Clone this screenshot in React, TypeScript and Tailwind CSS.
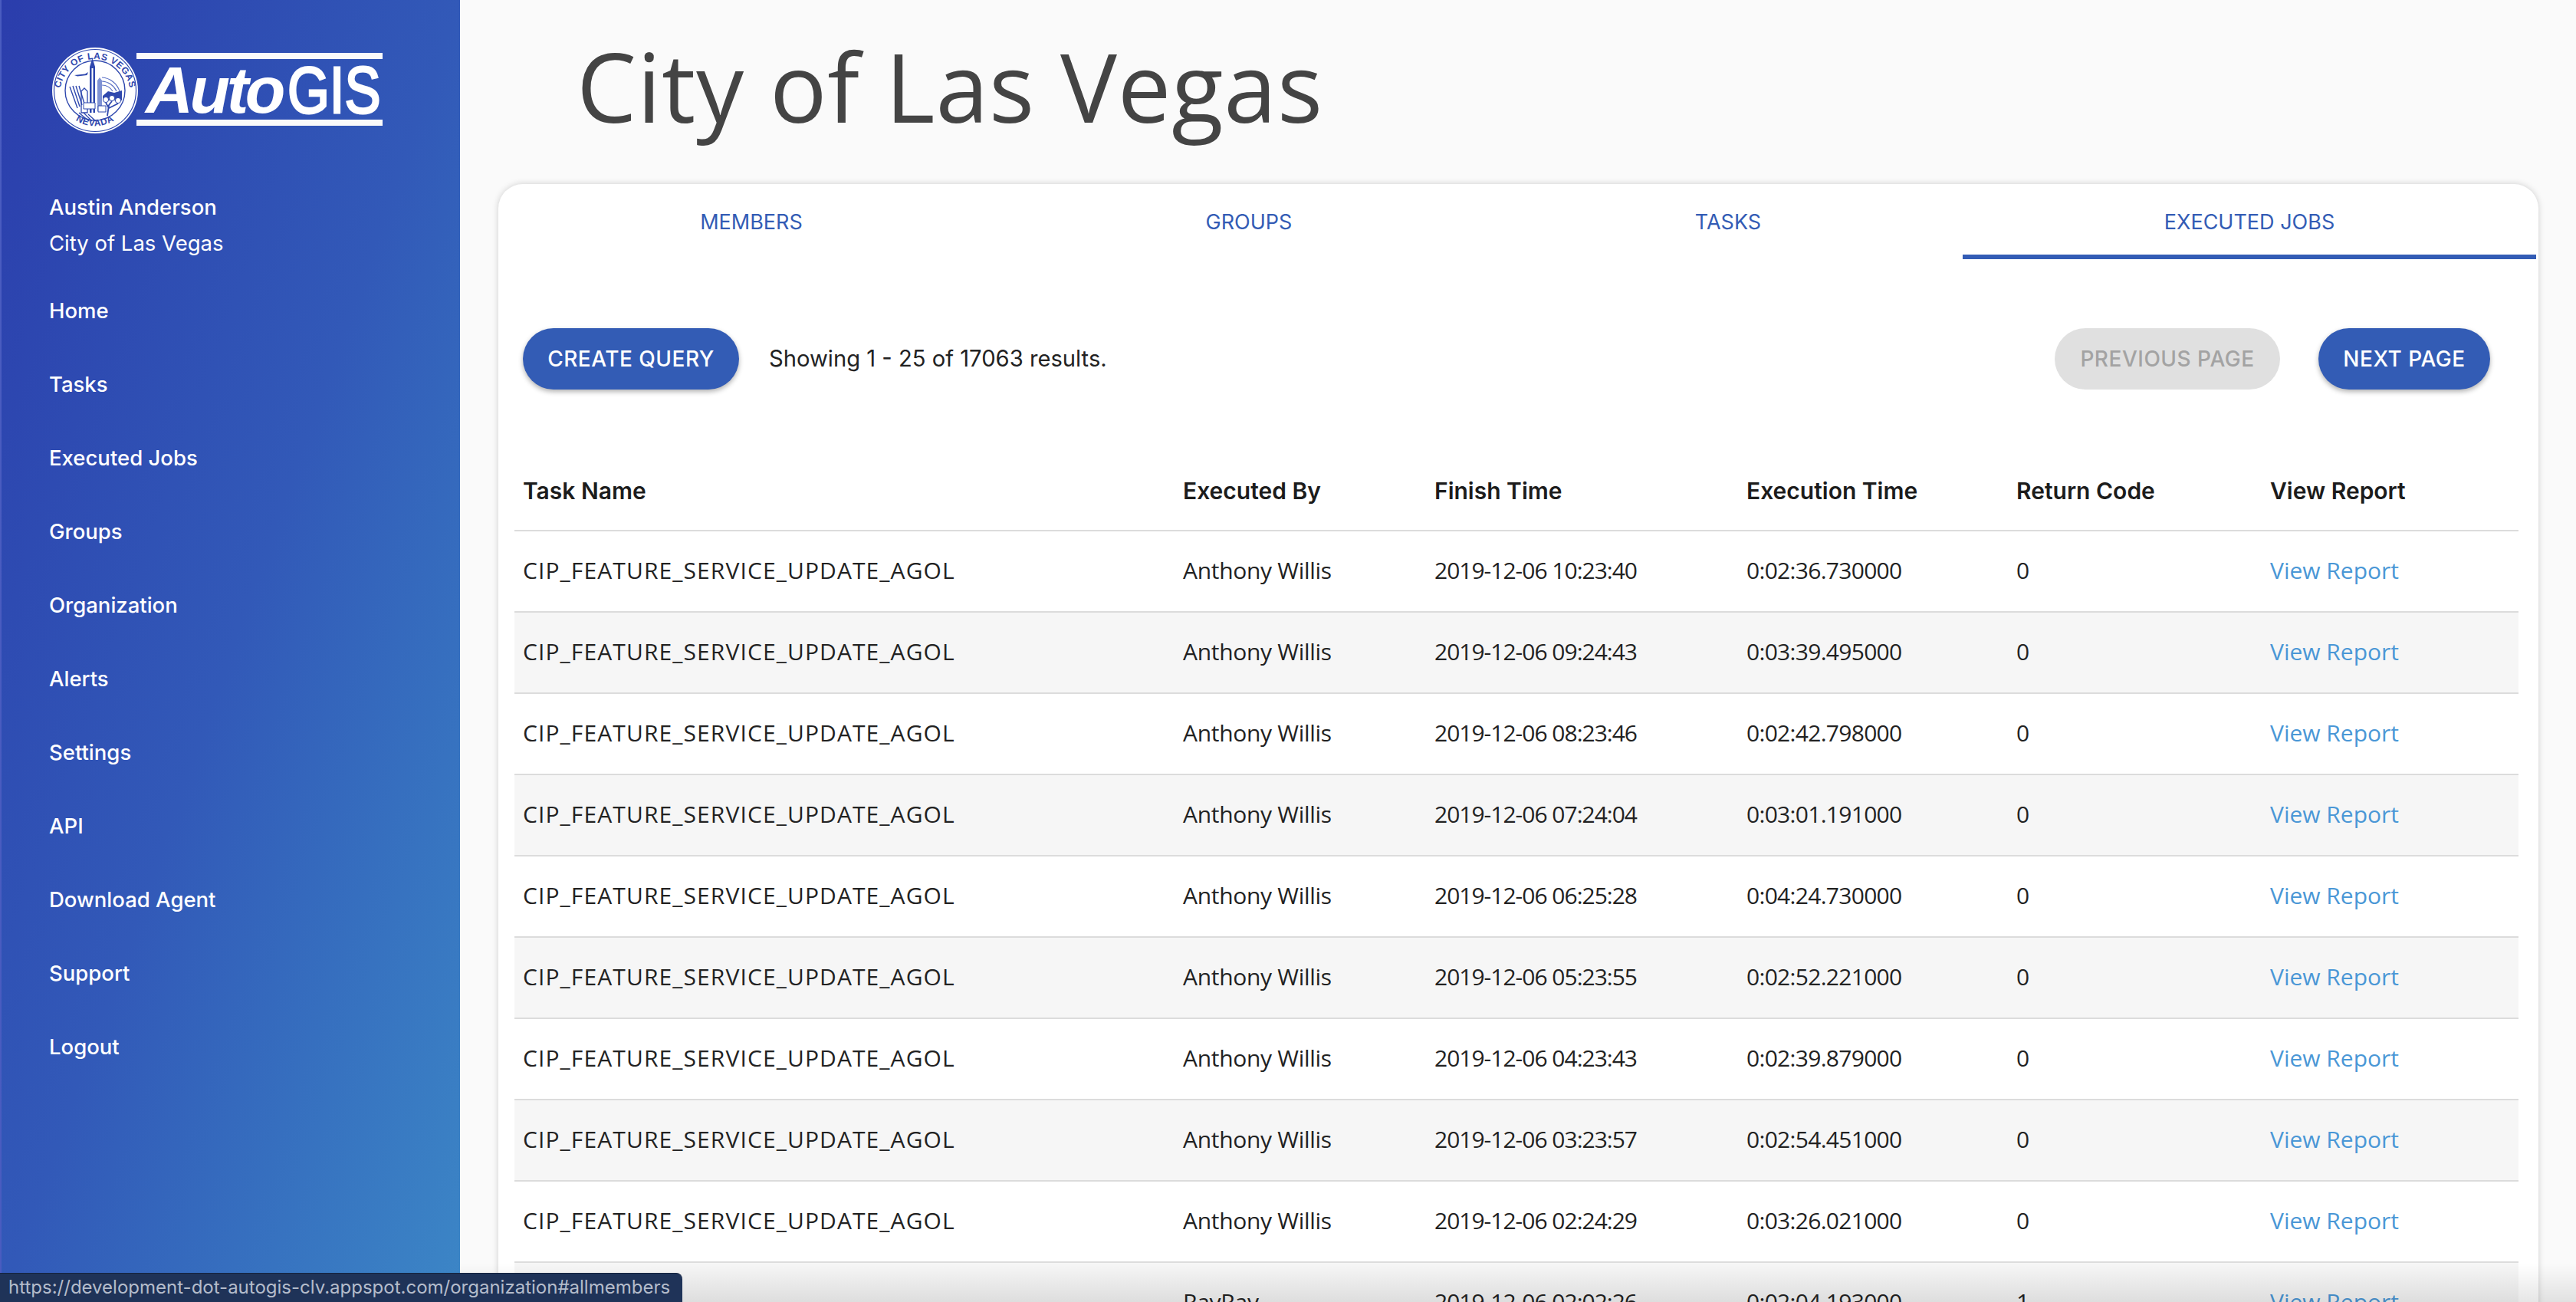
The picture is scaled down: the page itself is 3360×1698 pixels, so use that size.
const navItems = ["Home", "Tasks", "Executed Jobs", "Groups", "Organization", "Alerts", "Settings", "API", "Download Agent", "Support", "Logout"];

const tabs = [
  { label: "MEMBERS", width: "w-[660px]" },
  { label: "GROUPS", width: "w-[638px]" },
  { label: "TASKS", width: "w-[612px]" },
  { label: "EXECUTED JOBS", width: "w-[748px]", active: true },
];

const task = "CIP_FEATURE_SERVICE_UPDATE_AGOL";
const rows = [
  [task, "Anthony Willis", "2019-12-06 10:23:40", "0:02:36.730000", "0"],
  [task, "Anthony Willis", "2019-12-06 09:24:43", "0:03:39.495000", "0"],
  [task, "Anthony Willis", "2019-12-06 08:23:46", "0:02:42.798000", "0"],
  [task, "Anthony Willis", "2019-12-06 07:24:04", "0:03:01.191000", "0"],
  [task, "Anthony Willis", "2019-12-06 06:25:28", "0:04:24.730000", "0"],
  [task, "Anthony Willis", "2019-12-06 05:23:55", "0:02:52.221000", "0"],
  [task, "Anthony Willis", "2019-12-06 04:23:43", "0:02:39.879000", "0"],
  [task, "Anthony Willis", "2019-12-06 03:23:57", "0:02:54.451000", "0"],
  [task, "Anthony Willis", "2019-12-06 02:24:29", "0:03:26.021000", "0"],
  ["", "RayRay", "2019-12-06 02:02:26", "0:02:04.193000", "1"],
];

const cellTracking = ["tracking-[1.1px]", "tracking-[-0.3px]", "tracking-[-1px]", "tracking-[-0.7px]", ""];

const Logo = () => (
  <div className="flex items-start">
    <svg width="114" height="114" viewBox="0 0 114 114" className="mt-[-1px] shrink-0">
      <defs>
        <path id="sealTop" d="M 11 62 A 46 46 0 0 1 103 62" />
        <path id="sealBottom" d="M 21 86 A 46 46 0 0 0 93 86" />
      </defs>
      <ellipse cx="57" cy="57" rx="56" ry="56" fill="#fff" />
      <ellipse cx="57" cy="57" rx="53.5" ry="53.5" fill="none" stroke="#2f48ae" strokeWidth="1.2" />
      <text fontFamily="'Liberation Sans', sans-serif" fontWeight="700" fontSize="12" fill="#2f48ae" letterSpacing="0.5">
        <textPath href="#sealTop" startOffset="50%" textAnchor="middle">CITY OF LAS VEGAS</textPath>
      </text>
      <text fontFamily="'Liberation Sans', sans-serif" fontWeight="700" fontSize="12" fill="#2f48ae" letterSpacing="0.6">
        <textPath href="#sealBottom" startOffset="50%" textAnchor="middle">NEVADA</textPath>
      </text>
      <ellipse cx="57" cy="57" rx="39" ry="39" fill="none" stroke="#2f48ae" strokeWidth="1.4" />
      {/* monument */}
      <path d="M50 86 L50 26 L53.5 15 L57 26 L57 86 Z" fill="#2f48ae" />
      <path d="M52.5 86 L52.5 28 L54.5 28 L54.5 86 Z" fill="#fff" />
      <path d="M60 84 L60 44 L63 40 L66 44 L66 84 Z" fill="#7f92d4" />
      <path d="M39 86 L39 58 L43 54 L47 58 L47 86 Z" fill="none" stroke="#2f48ae" strokeWidth="1.3" />
      {/* dam lines */}
      <path d="M24 52 L34 80 M28 51 L37 78 M32 51 L40 76 M36 51 L43 74" stroke="#2f48ae" strokeWidth="1.4" fill="none" />
      {/* plane */}
      <path d="M30 37 L44 35.5 L48 33 L46.5 37 L34 38.5 Z" fill="#2f48ae" />
      {/* rainbow + hills */}
      <path d="M66 40 A 26 26 0 0 1 89 58 M66 45 A 22 22 0 0 1 85 58 M66 50 A 17 17 0 0 1 80 58" fill="none" stroke="#5a70c4" strokeWidth="1.2" />
      <path d="M67 64 L74 58 L82 60 L92 57 L92 70 L67 70 Z" fill="#2f48ae" />
      {/* joshua tree */}
      <circle cx="71" cy="69" r="3.6" fill="#fff" stroke="#2f48ae" />
      <circle cx="79" cy="67" r="3.6" fill="#fff" stroke="#2f48ae" />
      <circle cx="87" cy="70" r="3.6" fill="#fff" stroke="#2f48ae" />
      <path d="M73 90 L75 76 M75 80 L71 73 M75 80 L87 74 M75 76 L79 71" stroke="#2f48ae" strokeWidth="1.8" fill="none" />
      <path d="M42 73 L57 73 L57 81 L42 81 Z M61 77 L71 77 L71 85 L61 85 Z" fill="#fff" stroke="#2f48ae" />
      <path d="M36 86 L49 97 M42 86 L53 97 M48 88 L58 97" stroke="#2f48ae" strokeWidth="1.3" fill="none" />
    </svg>
    <div className="ml-[-3px] w-[321px] mt-[7px] flex flex-col">
      <div className="h-[8px] bg-[#fafafa]" />
      <div className="h-[79px] flex items-center pl-[12px] text-white font-['Liberation_Sans',sans-serif] leading-none whitespace-nowrap">
        <span className="w-[176px] italic font-bold text-[86px] tracking-[-4.5px]">Auto</span>
        <span className="ml-[9px] inline-block origin-left scale-x-[0.82] text-[86px] [-webkit-text-stroke:3px_white]">GIS</span>
      </div>
      <div className="h-[8px] bg-[#fafafa]" />
    </div>
  </div>
);

const Sidebar = () => (
  <aside className="w-[600px] shrink-0 h-full bg-gradient-to-br from-[#2b3dac] via-[#3259b8] to-[#3c86c6] text-white font-['Inter',sans-serif] font-medium text-[27.5px] border-l-2 border-[#4a5cc0]">
    <div className="pl-[65px] pt-[62px]">
      <Logo />
    </div>
    <div className="pl-[62px] mt-[72px] leading-[47px]">
      <div>Austin Anderson</div>
      <div className="font-normal">City of Las Vegas</div>
    </div>
    <nav className="pl-[62px] mt-[40px] flex flex-col">
      {navItems.map((item) => (
        <a key={item} className="h-[96px] leading-[48px]">{item}</a>
      ))}
    </nav>
  </aside>
);

const PillButton = ({ label, className }: { label: string; className: string }) => (
  <button className={`h-[80px] rounded-full text-[28px] font-medium tracking-[0.5px] ${className}`}>{label}</button>
);

const JobsTable = () => (
  <table className="mt-[82px] ml-[21px] w-[2614px] table-fixed border-collapse text-[30px] text-[#222] font-['Open_Sans',sans-serif]">
    <colgroup>
      <col className="w-[861px]" />
      <col className="w-[328px]" />
      <col className="w-[407px]" />
      <col className="w-[352px]" />
      <col className="w-[331px]" />
      <col className="w-[335px]" />
    </colgroup>
    <thead>
      <tr className="h-[102px] text-left font-['Inter',sans-serif] text-[30px] text-[#1c1c1c]">
        {["Task Name", "Executed By", "Finish Time", "Execution Time", "Return Code", "View Report"].map((h) => (
          <th key={h} className="pl-[11px] font-semibold">{h}</th>
        ))}
      </tr>
    </thead>
    <tbody>
      {rows.map((row, i) => (
        <tr key={row[2]} className={`h-[106px] border-t-2 border-[#dcdcdc] ${i % 2 === 1 ? "bg-[#f6f6f6]" : "bg-white"}`}>
          {row.map((cell, j) => (
            <td key={j} className={`pl-[11px] pb-[4px] whitespace-nowrap ${cellTracking[j]}`}>{cell}</td>
          ))}
          <td className="pl-[11px] pb-[4px] text-[#4a97d6]">View Report</td>
        </tr>
      ))}
    </tbody>
  </table>
);

export default function App() {
  return (
    <div className="relative flex w-[3360px] h-[1698px] overflow-hidden bg-[#fafafa]">
      <Sidebar />
      <main className="relative flex-1 min-w-0">
        <h1 className="ml-[152px] h-[240px] pt-[32px] text-[124px] tracking-[0.8px] leading-[160px] text-[#444] font-['Open_Sans',sans-serif]">City of Las Vegas</h1>
        <section className="ml-[50px] w-[2661px] h-[1600px] bg-white rounded-t-[32px] shadow-[0_0_8px_rgba(0,0,0,0.18)] font-['Inter',sans-serif]">
          <div className="flex h-[98px] text-[27px] text-[#335cb5]">
            {tabs.map((t) => (
              <div key={t.label} className={`${t.width} flex items-center justify-center pt-[8px] border-b-[6px] ${t.active ? "border-[#335cb5]" : "border-transparent"}`}>{t.label}</div>
            ))}
          </div>
          <div className="flex items-center mt-[90px] pl-[32px] pr-[63px]">
            <PillButton label="CREATE QUERY" className="w-[282px] bg-[#335cb5] text-white shadow-[0_3px_6px_rgba(0,0,0,0.3)]" />
            <span className="ml-[39px] text-[29.2px] text-[#222]">Showing 1 - 25 of 17063 results.</span>
            <PillButton label="PREVIOUS PAGE" className="ml-auto w-[294px] bg-[#e0e0e0] text-[#a3a3a3]" />
            <PillButton label="NEXT PAGE" className="ml-[50px] w-[224px] bg-[#335cb5] text-white shadow-[0_3px_6px_rgba(0,0,0,0.3)]" />
          </div>
          <JobsTable />
        </section>
        <div className="absolute left-0 right-0 bottom-0 h-[50px] bg-gradient-to-b from-transparent to-black/10" />
      </main>
      <div className="absolute left-0 bottom-0 w-[890px] h-[38px] bg-[#1f3358] border-t border-[#14233f] rounded-tr-[8px] pl-[11px] text-[24px] leading-[36px] text-[#b4bccb] font-['Inter',sans-serif] whitespace-nowrap">
        https://development-dot-autogis-clv.appspot.com/organization#allmembers
      </div>
    </div>
  );
}
